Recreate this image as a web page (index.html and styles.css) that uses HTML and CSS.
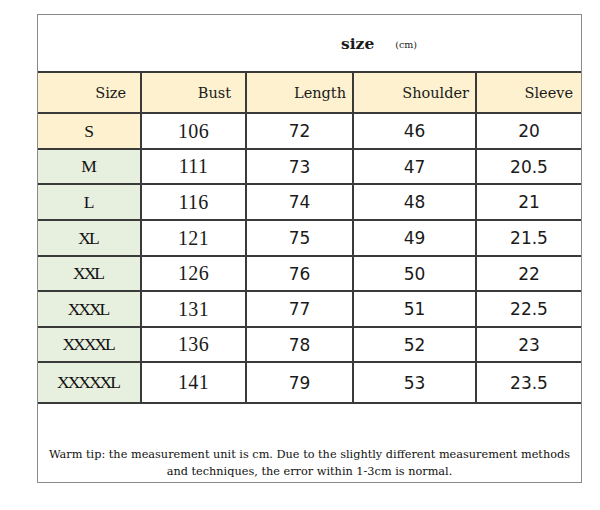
FILE: index.html
```html
<!DOCTYPE html>
<html>
<head>
<meta charset="utf-8">
<link rel="stylesheet" href="styles.css">
</head>
<body>
<div class="chart">
  <div class="title"><span class="title-main">size</span><span class="title-unit">(cm)</span></div>
  <table class="grid">
    <colgroup>
      <col class="c1"><col class="c2"><col class="c3"><col class="c4"><col class="c5">
    </colgroup>
    <tr class="head">
      <th class="h-size">Size</th>
      <th class="h-bust">Bust</th>
      <th class="h-length">Length</th>
      <th class="h-shoulder">Shoulder</th>
      <th class="h-sleeve">Sleeve</th>
    </tr>
    <tr class="r36"><td class="size yellow">S</td><td class="serif">106</td><td class="sans">72</td><td class="sans">46</td><td class="sans">20</td></tr>
    <tr class="r35"><td class="size green">M</td><td class="serif">111</td><td class="sans">73</td><td class="sans">47</td><td class="sans">20.5</td></tr>
    <tr class="r36"><td class="size green">L</td><td class="serif">116</td><td class="sans">74</td><td class="sans">48</td><td class="sans">21</td></tr>
    <tr class="r36"><td class="size green">XL</td><td class="serif">121</td><td class="sans">75</td><td class="sans">49</td><td class="sans">21.5</td></tr>
    <tr class="r35"><td class="size green">XXL</td><td class="serif">126</td><td class="sans">76</td><td class="sans">50</td><td class="sans">22</td></tr>
    <tr class="r36"><td class="size green">XXXL</td><td class="serif">131</td><td class="sans">77</td><td class="sans">51</td><td class="sans">22.5</td></tr>
    <tr class="r35"><td class="size green">XXXXL</td><td class="serif">136</td><td class="sans">78</td><td class="sans">52</td><td class="sans">23</td></tr>
    <tr class="r41"><td class="size green">XXXXXL</td><td class="serif">141</td><td class="sans">79</td><td class="sans">53</td><td class="sans">23.5</td></tr>
  </table>
  <div class="note">Warm tip: the measurement unit is cm. Due to the slightly different measurement methods<br>and techniques, the error within 1-3cm is normal.</div>
</div>
</body>
</html>
```

FILE: styles.css
```css
html, body {
  margin: 0;
  padding: 0;
  background: #ffffff;
}
body {
  padding: 14px 0 0 37px;
}
.chart {
  width: 545px;
  box-sizing: border-box;
  border: 1px solid #8a8a8a;
  background: #ffffff;
  color: #1a1a1a;
}
.title {
  height: 58px;
  box-sizing: border-box;
  display: flex;
  align-items: center;
  padding: 0 0 0 303px;
  border-bottom: 2px solid #3a3a3a;
}
.title-main {
  font-family: "DejaVu Serif", serif;
  font-weight: bold;
  font-size: 15.5px;
}
.title-unit {
  font-family: "DejaVu Serif", serif;
  font-size: 9.5px;
  margin-left: 21px;
  padding-top: 2px;
}
.grid {
  width: 100%;
  border-collapse: collapse;
  table-layout: fixed;
}
.c1 { width: 103px; }
.c2 { width: 105px; }
.c3 { width: 107px; }
.c4 { width: 123px; }
.c5 { width: 105px; }
.grid th, .grid td {
  border: 2px solid #3a3a3a;
  padding: 0;
  white-space: nowrap;
}
.grid tr > :first-child { border-left: none; }
.grid tr > :last-child { border-right: none; }
.grid tr.head th { border-top: none; }
.head th {
  height: 38px;
  background: #fdf1cf;
  font-family: "DejaVu Serif", serif;
  font-weight: normal;
  font-size: 14.5px;
  text-align: right;
  padding-top: 1px;
}
.h-size, .h-bust { padding-right: 14px !important; }
.h-length, .h-shoulder { padding-right: 6px !important; }
.h-sleeve { padding-right: 8px !important; }
.r35 td { height: 33px; }
.r36 td { height: 34px; }
.r41 td { height: 39px; }
.grid td {
  text-align: center;
}
.size {
  font-family: "Liberation Serif", serif;
  font-size: 17.5px;
  letter-spacing: -2px;
  text-indent: -2px;
  color: #111;
}
.yellow { background: #fdf1cf; }
.green { background: #e7efdf; }
.serif {
  font-family: "Liberation Serif", serif;
  font-size: 20px;
  letter-spacing: 0.3px;
}
.sans {
  font-family: "DejaVu Sans", sans-serif;
  font-size: 17px;
}
.note {
  height: 78px;
  box-sizing: border-box;
  padding-top: 42px;
  font-family: "DejaVu Serif", serif;
  font-size: 11.3px;
  line-height: 17px;
  text-align: center;
  color: #111;
}
```
